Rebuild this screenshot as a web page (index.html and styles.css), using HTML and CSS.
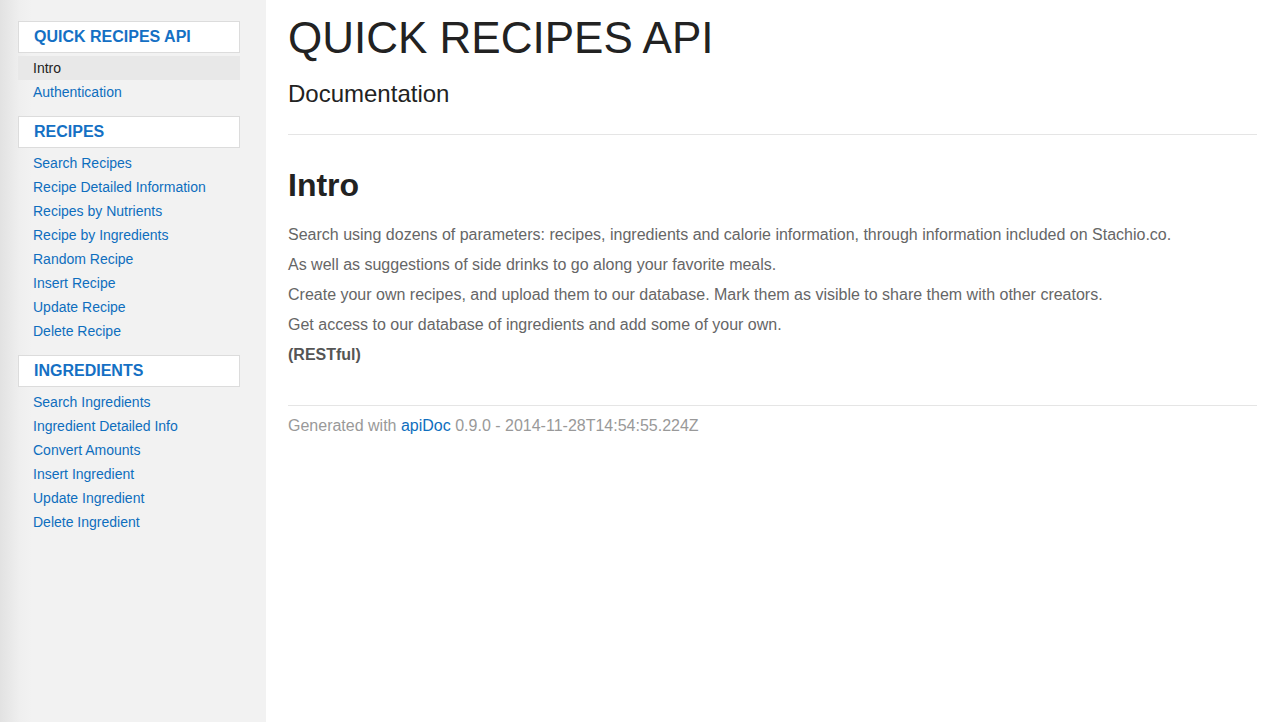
FILE: index.html
```html
<!DOCTYPE html>
<html>
<head>
<meta charset="utf-8">
<title>QUICK RECIPES API</title>
<link rel="stylesheet" href="styles.css">
</head>
<body>
<div class="layout">
  <aside class="sidebar">
    <ul class="nav">
      <li class="nav-header">QUICK RECIPES API</li>
      <li class="nav-item active"><a href="#">Intro</a></li>
      <li class="nav-item"><a href="#">Authentication</a></li>
    </ul>
    <ul class="nav">
      <li class="nav-header">RECIPES</li>
      <li class="nav-item"><a href="#">Search Recipes</a></li>
      <li class="nav-item"><a href="#">Recipe Detailed Information</a></li>
      <li class="nav-item"><a href="#">Recipes by Nutrients</a></li>
      <li class="nav-item"><a href="#">Recipe by Ingredients</a></li>
      <li class="nav-item"><a href="#">Random Recipe</a></li>
      <li class="nav-item"><a href="#">Insert Recipe</a></li>
      <li class="nav-item"><a href="#">Update Recipe</a></li>
      <li class="nav-item"><a href="#">Delete Recipe</a></li>
    </ul>
    <ul class="nav">
      <li class="nav-header">INGREDIENTS</li>
      <li class="nav-item"><a href="#">Search Ingredients</a></li>
      <li class="nav-item"><a href="#">Ingredient Detailed Info</a></li>
      <li class="nav-item"><a href="#">Convert Amounts</a></li>
      <li class="nav-item"><a href="#">Insert Ingredient</a></li>
      <li class="nav-item"><a href="#">Update Ingredient</a></li>
      <li class="nav-item"><a href="#">Delete Ingredient</a></li>
    </ul>
  </aside>
  <main class="content">
    <header class="page-header">
      <h1 class="title">QUICK RECIPES API</h1>
      <h2 class="subtitle">Documentation</h2>
    </header>
    <section class="intro">
      <h2 class="section-title">Intro</h2>
      <p>Search using dozens of parameters: recipes, ingredients and calorie information, through information included on Stachio.co.</p>
      <p>As well as suggestions of side drinks to go along your favorite meals.</p>
      <p>Create your own recipes, and upload them to our database. Mark them as visible to share them with other creators.</p>
      <p>Get access to our database of ingredients and add some of your own.</p>
      <p><strong>(RESTful)</strong></p>
    </section>
    <footer class="footer">
      Generated with <a href="#">apiDoc</a> 0.9.0 - 2014-11-28T14:54:55.224Z
    </footer>
  </main>
</div>
</body>
</html>
```

FILE: styles.css
```css
html, body {
  margin: 0;
  padding: 0;
  height: 100%;
}
body {
  font-family: "Helvetica Neue", Helvetica, "Liberation Sans", Arial, sans-serif;
  background: #fff;
  color: #666;
}
a {
  color: #0e6ebe;
  text-decoration: none;
}
.layout {
  display: flex;
  min-height: 100vh;
}
.sidebar {
  width: 248px;
  flex: none;
  padding: 21px 0 0 18px;
  background: linear-gradient(to right, #e2e2e2 0px, #efefef 20px, #f2f2f2 32px, #f2f2f2 100%);
}
.nav {
  list-style: none;
  margin: 0 26px 12px 0;
  padding: 0;
  width: 222px;
}
.nav-header {
  box-sizing: border-box;
  height: 32px;
  line-height: 30px;
  margin-bottom: 3px;
  padding-left: 15px;
  background: #fff;
  border: 1px solid #dcdcdc;
  color: #1470c4;
  font-size: 16px;
  font-weight: bold;
}
.nav-item {
  height: 24px;
  line-height: 24px;
  padding-left: 15px;
  font-size: 14px;
}
.nav-item.active {
  background: #e8e8e8;
}
.nav-item.active a {
  color: #222;
}
.content {
  flex: 1;
  padding: 0 8px 0 22px;
}
.page-header {
  border-bottom: 1px solid #e5e5e5;
  padding-bottom: 25px;
}
.title {
  margin: 0;
  padding-top: 12px;
  font-size: 44px;
  line-height: 52px;
  font-weight: normal;
  color: #222;
}
.subtitle {
  margin: 15px 0 0;
  font-size: 24px;
  line-height: 30px;
  font-weight: normal;
  color: #222;
}
.intro {
  padding-top: 30px;
  padding-bottom: 30px;
  border-bottom: 1px solid #e5e5e5;
}
.section-title {
  margin: 0 0 20px;
  font-size: 32px;
  line-height: 40px;
  font-weight: bold;
  color: #222;
}
.intro p {
  margin: 0 0 10px;
  font-size: 16px;
  line-height: 20px;
}
.intro p strong {
  color: #555;
}
.footer {
  padding-top: 10px;
  font-size: 16px;
  line-height: 20px;
  color: #999;
}
```
